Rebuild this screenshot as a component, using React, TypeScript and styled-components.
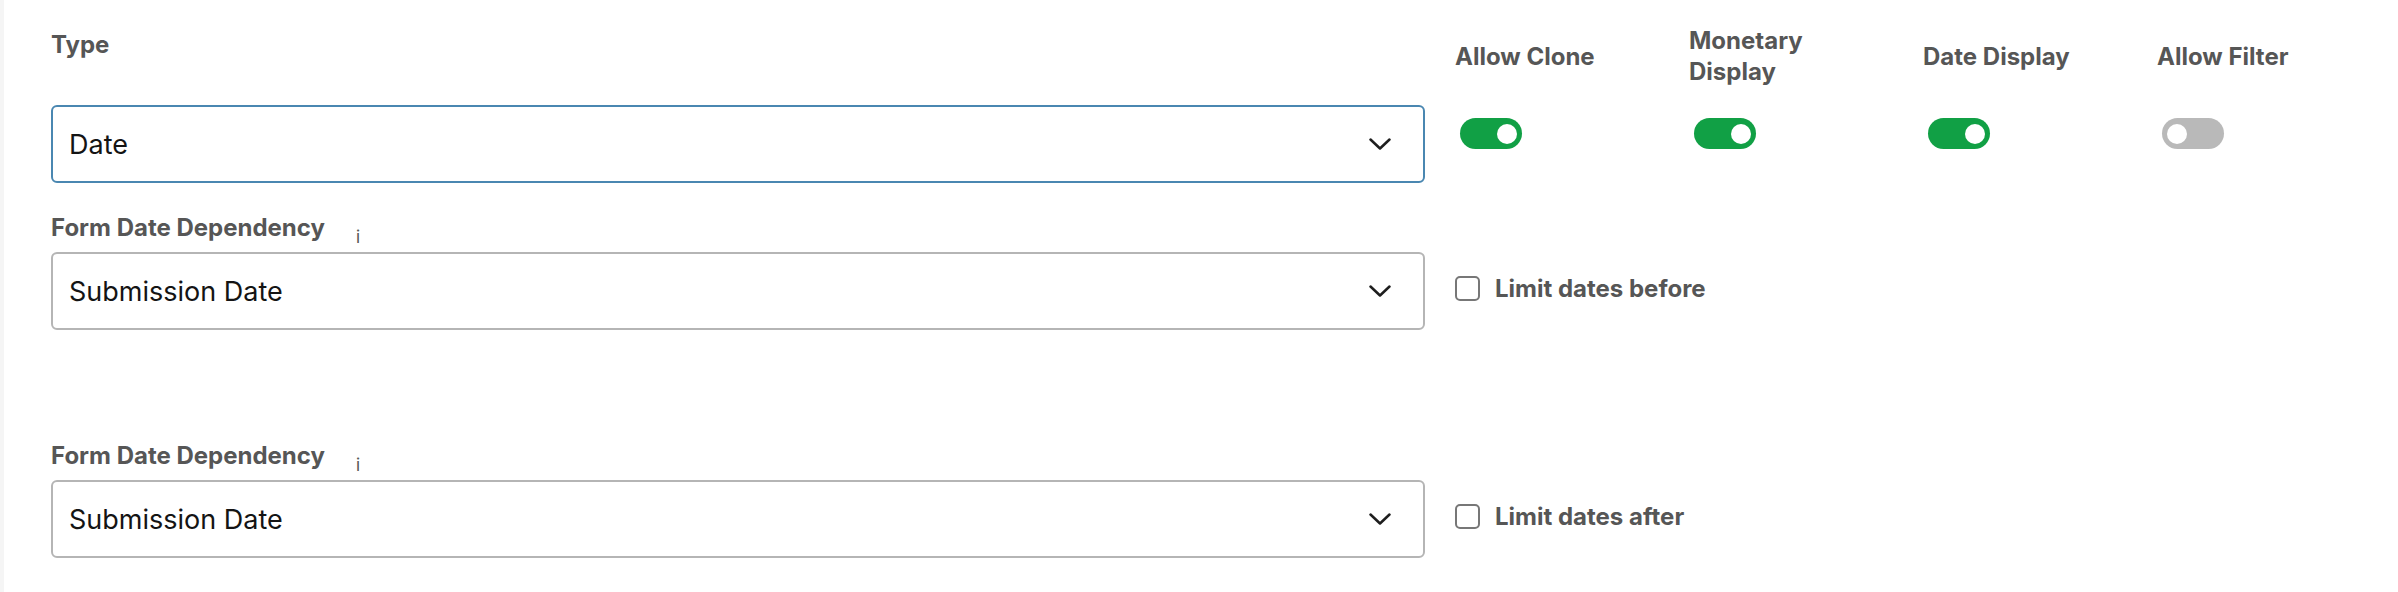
import React from 'react';
import styled, {createGlobalStyle} from 'styled-components';

const GlobalStyle = createGlobalStyle`
  body {
    margin: 0;
    background: #ffffff;
    font-family: Inter, "Noto Sans", "Liberation Sans", sans-serif;
  }
`;

const Page = styled.div`
  min-height: 592px;
  box-sizing: border-box;
  border-left: 4px solid #f5f5f5;
  padding: 24px 0 0 47px;
`;

const TopRow = styled.div`
  display: flex;
  align-items: flex-start;
`;

const FieldColumn = styled.div`
  width: 1374px;
  display: flex;
  flex-direction: column;
`;

const TypeLabel = styled.div`
  padding-top: 6px;
  margin-bottom: 46px;
  font-size: 24px;
  line-height: 29px;
  font-weight: 700;
  color: #565656;
`;

const SelectBox = styled.div<{$focused?: boolean}>`
  height: 78px;
  box-sizing: border-box;
  display: flex;
  align-items: center;
  justify-content: space-between;
  padding: 0 32px 0 16px;
  border: 2px solid ${({$focused}) => ($focused ? '#4a87b1' : '#b5b5b5')};
  border-radius: 6px;
  background: #fff;
  font-size: 27px;
  color: #141414;
`;

const Chevron = () => (
  <svg width="22" height="12" viewBox="0 0 22 12" fill="none">
    <path d="M1.5 1.5 L11 10.5 L20.5 1.5" stroke="#1e1e1e" strokeWidth="2.5" strokeLinecap="round" strokeLinejoin="round" />
  </svg>
);

const ToggleGroup = styled.div`
  margin-left: 30px;
  display: grid;
  grid-template-columns: repeat(4, 234px);
`;

const ToggleCell = styled.div`
  display: flex;
  flex-direction: column;
`;

const ToggleHeader = styled.div`
  height: 64px;
  display: flex;
  align-items: center;
`;

const ToggleLabel = styled.div`
  max-width: 190px;
  font-size: 24px;
  line-height: 31px;
  font-weight: 700;
  color: #565656;
`;

const Switch = styled.div<{$on: boolean}>`
  margin: 30px 0 0 5px;
  width: 62px;
  height: 31px;
  box-sizing: border-box;
  padding: 0 5px;
  border-radius: 16px;
  display: flex;
  align-items: center;
  justify-content: ${({$on}) => ($on ? 'flex-end' : 'flex-start')};
  background: ${({$on}) => ($on ? '#11a045' : '#b9b9b9')};
`;

const Knob = styled.span`
  width: 20px;
  height: 20px;
  border-radius: 50%;
  background: #fff;
`;

const DependencyBlock = styled.div<{$gap: number}>`
  margin-top: ${({$gap}) => $gap}px;
  display: flex;
  flex-direction: column;
`;

const LabelRow = styled.div`
  display: flex;
  align-items: flex-end;
  margin-bottom: 10px;
`;

const FieldLabel = styled.div`
  font-size: 24px;
  line-height: 28px;
  font-weight: 700;
  color: #565656;
`;

const InfoMark = styled.span`
  margin: 0 0 -4px 31px;
  font-size: 17px;
  line-height: 18px;
  color: #555;
`;

const ControlRow = styled.div`
  display: flex;
  align-items: center;
`;

const DateSelect = styled(SelectBox)`
  width: 1374px;
`;

const CheckOption = styled.label`
  margin: 0 0 6px 30px;
  display: flex;
  align-items: center;
  gap: 15px;
  font-size: 24px;
  font-weight: 700;
  color: #565656;
`;

const CheckSquare = styled.span`
  width: 25px;
  height: 25px;
  box-sizing: border-box;
  border: 2px solid #777;
  border-radius: 5px;
  background: #fff;
`;

const toggles = [
  {label: 'Allow Clone', on: true},
  {label: 'Monetary Display', on: true},
  {label: 'Date Display', on: true},
  {label: 'Allow Filter', on: false},
];

const dependencies = [
  {gap: 31, option: 'Limit dates before'},
  {gap: 112, option: 'Limit dates after'},
];

export default function App() {
  return (
    <>
      <GlobalStyle />
      <Page>
        <TopRow>
          <FieldColumn>
            <TypeLabel>Type</TypeLabel>
            <SelectBox $focused>
              <span>Date</span>
              <Chevron />
            </SelectBox>
          </FieldColumn>
          <ToggleGroup>
            {toggles.map(t => (
              <ToggleCell key={t.label}>
                <ToggleHeader>
                  <ToggleLabel>{t.label}</ToggleLabel>
                </ToggleHeader>
                <Switch $on={t.on}>
                  <Knob />
                </Switch>
              </ToggleCell>
            ))}
          </ToggleGroup>
        </TopRow>

        {dependencies.map(d => (
          <DependencyBlock key={d.option} $gap={d.gap}>
            <LabelRow>
              <FieldLabel>Form Date Dependency</FieldLabel>
              <InfoMark>i</InfoMark>
            </LabelRow>
            <ControlRow>
              <DateSelect>
                <span>Submission Date</span>
                <Chevron />
              </DateSelect>
              <CheckOption>
                <CheckSquare />
                {d.option}
              </CheckOption>
            </ControlRow>
          </DependencyBlock>
        ))}
      </Page>
    </>
  );
}
